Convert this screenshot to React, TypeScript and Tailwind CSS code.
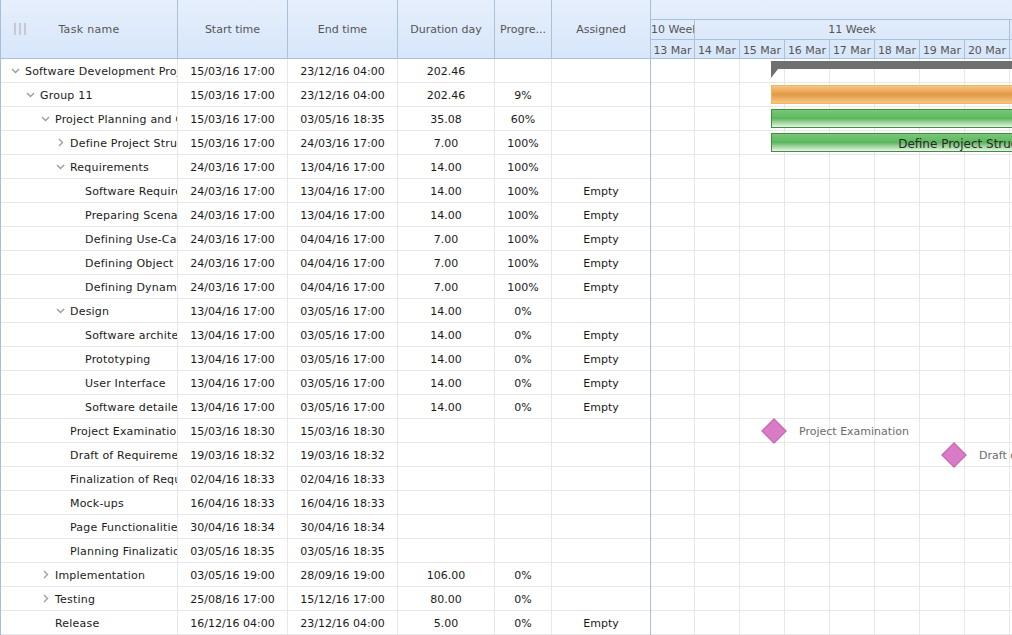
import React from "react";

type Row = {
  level: number;
  name: string;
  exp: "open" | "closed" | null;
  start: string;
  end: string;
  dur: string;
  prog: string;
  asg: string;
};

const rows: Row[] = [
  { level: 0, name: "Software Development Project", exp: "open", start: "15/03/16 17:00", end: "23/12/16 04:00", dur: "202.46", prog: "", asg: "" },
  { level: 1, name: "Group 11", exp: "open", start: "15/03/16 17:00", end: "23/12/16 04:00", dur: "202.46", prog: "9%", asg: "" },
  { level: 2, name: "Project Planning and Control", exp: "open", start: "15/03/16 17:00", end: "03/05/16 18:35", dur: "35.08", prog: "60%", asg: "" },
  { level: 3, name: "Define Project Structure", exp: "closed", start: "15/03/16 17:00", end: "24/03/16 17:00", dur: "7.00", prog: "100%", asg: "" },
  { level: 3, name: "Requirements", exp: "open", start: "24/03/16 17:00", end: "13/04/16 17:00", dur: "14.00", prog: "100%", asg: "" },
  { level: 4, name: "Software Requirements", exp: null, start: "24/03/16 17:00", end: "13/04/16 17:00", dur: "14.00", prog: "100%", asg: "Empty" },
  { level: 4, name: "Preparing Scenarios", exp: null, start: "24/03/16 17:00", end: "13/04/16 17:00", dur: "14.00", prog: "100%", asg: "Empty" },
  { level: 4, name: "Defining Use-Cases", exp: null, start: "24/03/16 17:00", end: "04/04/16 17:00", dur: "7.00", prog: "100%", asg: "Empty" },
  { level: 4, name: "Defining Object Model", exp: null, start: "24/03/16 17:00", end: "04/04/16 17:00", dur: "7.00", prog: "100%", asg: "Empty" },
  { level: 4, name: "Defining Dynamic Model", exp: null, start: "24/03/16 17:00", end: "04/04/16 17:00", dur: "7.00", prog: "100%", asg: "Empty" },
  { level: 3, name: "Design", exp: "open", start: "13/04/16 17:00", end: "03/05/16 17:00", dur: "14.00", prog: "0%", asg: "" },
  { level: 4, name: "Software architecture", exp: null, start: "13/04/16 17:00", end: "03/05/16 17:00", dur: "14.00", prog: "0%", asg: "Empty" },
  { level: 4, name: "Prototyping", exp: null, start: "13/04/16 17:00", end: "03/05/16 17:00", dur: "14.00", prog: "0%", asg: "Empty" },
  { level: 4, name: "User Interface", exp: null, start: "13/04/16 17:00", end: "03/05/16 17:00", dur: "14.00", prog: "0%", asg: "Empty" },
  { level: 4, name: "Software detailed design", exp: null, start: "13/04/16 17:00", end: "03/05/16 17:00", dur: "14.00", prog: "0%", asg: "Empty" },
  { level: 3, name: "Project Examination", exp: null, start: "15/03/16 18:30", end: "15/03/16 18:30", dur: "", prog: "", asg: "" },
  { level: 3, name: "Draft of Requirements", exp: null, start: "19/03/16 18:32", end: "19/03/16 18:32", dur: "", prog: "", asg: "" },
  { level: 3, name: "Finalization of Requirements", exp: null, start: "02/04/16 18:33", end: "02/04/16 18:33", dur: "", prog: "", asg: "" },
  { level: 3, name: "Mock-ups", exp: null, start: "16/04/16 18:33", end: "16/04/16 18:33", dur: "", prog: "", asg: "" },
  { level: 3, name: "Page Functionalities", exp: null, start: "30/04/16 18:34", end: "30/04/16 18:34", dur: "", prog: "", asg: "" },
  { level: 3, name: "Planning Finalization", exp: null, start: "03/05/16 18:35", end: "03/05/16 18:35", dur: "", prog: "", asg: "" },
  { level: 2, name: "Implementation", exp: "closed", start: "03/05/16 19:00", end: "28/09/16 19:00", dur: "106.00", prog: "0%", asg: "" },
  { level: 2, name: "Testing", exp: "closed", start: "25/08/16 17:00", end: "15/12/16 17:00", dur: "80.00", prog: "0%", asg: "" },
  { level: 2, name: "Release", exp: null, start: "16/12/16 04:00", end: "23/12/16 04:00", dur: "5.00", prog: "0%", asg: "Empty" },
];

const days = ["13 Mar", "14 Mar", "15 Mar", "16 Mar", "17 Mar", "18 Mar", "19 Mar", "20 Mar", "21 Mar"];

function Chevron({ dir }: { dir: "open" | "closed" }) {
  return (
    <svg width="9" height="9" viewBox="0 0 9 9" className="block">
      {dir === "open" ? (
        <polyline points="1,3 4.5,6.5 8,3" fill="none" stroke="#9a9a9a" strokeWidth="1.3" />
      ) : (
        <polyline points="3,1 6.5,4.5 3,8" fill="none" stroke="#9a9a9a" strokeWidth="1.3" />
      )}
    </svg>
  );
}

const headCell =
  "h-full flex items-center justify-center pt-[2px] text-[#555] border-r border-[#a9c2da] shrink-0 whitespace-nowrap overflow-hidden";
const bodyCell =
  "h-full flex items-center justify-center pt-[3px] border-r border-[#e8e8e8] shrink-0 whitespace-nowrap overflow-hidden";

function dayW(i: number) {
  return i === 0 ? "w-[44px]" : "w-[45px]";
}

export default function App() {
  return (
    <div className="w-[1012px] h-[635px] overflow-hidden bg-white flex font-['DejaVu_Sans',sans-serif] text-[11px] text-[#1a1a1a]">
      {/* Left grid */}
      <div className="w-[651px] shrink-0 h-full flex flex-col border-l border-r border-[#a3bfdb]">
        <div className="h-[59px] shrink-0 flex border-b border-[#a9c2da] bg-gradient-to-b from-[#e6effc] to-[#d7e6fa] relative">
          <div className={`${headCell} w-[177px] relative`}>
            <div className="absolute left-[13px] top-[23px] flex gap-[3px]">
              <div className="w-[2px] h-[12px] bg-[#c6c9cd]" />
              <div className="w-[2px] h-[12px] bg-[#c6c9cd]" />
              <div className="w-[2px] h-[12px] bg-[#c6c9cd]" />
            </div>
            <span className="tracking-[0.3px]">Task name</span>
          </div>
          <div className={`${headCell} w-[110px]`}>Start time</div>
          <div className={`${headCell} w-[110px]`}>End time</div>
          <div className={`${headCell} w-[97px]`}>Duration day</div>
          <div className={`${headCell} w-[57px]`}>Progre...</div>
          <div className={`${headCell} w-[98px] border-r-0`}>Assigned</div>
        </div>
        <div className="flex flex-col">
          {rows.map((r, i) => (
            <div key={i} className="h-[24px] shrink-0 flex border-b border-[#e8e8e8]">
              <div className={`${bodyCell} w-[177px] justify-start`} style={{ paddingLeft: 7 + r.level * 15 }}>
                <div className="w-[15px] h-full flex items-center justify-center shrink-0 -mt-[3px]">
                  {r.exp && <Chevron dir={r.exp} />}
                </div>
                <span className="ml-[2px] tracking-[0.2px]">{r.name}</span>
              </div>
              <div className={`${bodyCell} w-[110px]`}>{r.start}</div>
              <div className={`${bodyCell} w-[110px]`}>{r.end}</div>
              <div className={`${bodyCell} w-[97px]`}>{r.dur}</div>
              <div className={`${bodyCell} w-[57px]`}>{r.prog}</div>
              <div className={`${bodyCell} w-[98px] border-r-0`}>{r.asg}</div>
            </div>
          ))}
        </div>
      </div>

      {/* Gantt chart */}
      <div className="flex-1 h-full flex flex-col overflow-hidden">
        <div className="h-[59px] shrink-0 flex flex-col bg-gradient-to-b from-[#e6effc] to-[#d7e6fa] border-b border-[#a9c2da] text-[#555]">
          <div className="h-[20px] shrink-0 border-b border-[#a9c2da]" />
          <div className="h-[20px] shrink-0 flex border-b border-[#a9c2da]">
            <div className="w-[44px] shrink-0 h-full pt-[2px] border-r border-[#a9c2da] overflow-hidden whitespace-nowrap flex items-center">
              10 Week
            </div>
            <div className="w-[315px] shrink-0 h-full pt-[2px] border-r border-[#a9c2da] flex items-center justify-center whitespace-nowrap">
              11 Week
            </div>
            <div className="w-[45px] shrink-0 h-full" />
          </div>
          <div className="flex-1 flex">
            {days.map((d, i) => (
              <div
                key={d}
                className={`${dayW(i)} shrink-0 h-full pt-[3px] border-r border-[#a9c2da] flex items-center justify-center whitespace-nowrap overflow-hidden`}
              >
                {d}
              </div>
            ))}
          </div>
        </div>
        <div className="relative flex flex-col">
          {rows.map((_, i) => (
            <div key={i} className="h-[24px] shrink-0 flex border-b border-[#e8e8e8]">
              {days.map((d, j) => (
                <div key={d} className={`${dayW(j)} shrink-0 h-full border-r border-[#e8e8e8]`} />
              ))}
            </div>
          ))}

          {/* summary bar */}
          <div className="absolute left-[120px] top-[2px] w-[500px] h-[8px] bg-[#6d6f71]" />
          <svg className="absolute left-[120px] top-[10px]" width="7" height="9" viewBox="0 0 7 9">
            <polygon points="0,0 7,0 0,9" fill="#6d6f71" />
          </svg>

          {/* orange group bar */}
          <div className="absolute left-[120px] top-[26px] w-[500px] h-[19px] border border-[#f3b466] bg-gradient-to-b from-[#f8c47f] via-[#e29944] to-[#f8c682]" />

          {/* green bars */}
          <div className="absolute left-[120px] top-[50px] w-[500px] h-[19px] border border-[#3f8f3f] bg-gradient-to-b from-[#78c878] via-[#5db75d] to-[#e6f4e6]" />
          <div className="absolute left-[120px] top-[74px] w-[398px] h-[19px] pt-[2px] border border-[#3f8f3f] bg-gradient-to-b from-[#78c878] via-[#5db75d] to-[#e6f4e6] flex items-center justify-center whitespace-nowrap text-[12px] text-[#2a2a2a]">
            Define Project Structure
          </div>

          {/* milestones */}
          <div className="absolute left-[114px] top-[363px] w-[18px] h-[18px] rotate-45 bg-[#d97cc5] border border-[#c862b4]" />
          <div className="absolute left-[148px] top-[361px] h-[24px] flex items-center whitespace-nowrap text-[#6b6b6b]">
            Project Examination
          </div>
          <div className="absolute left-[294px] top-[387px] w-[18px] h-[18px] rotate-45 bg-[#d97cc5] border border-[#c862b4]" />
          <div className="absolute left-[328px] top-[385px] h-[24px] flex items-center whitespace-nowrap text-[#6b6b6b]">
            Draft of Requirements
          </div>
        </div>
      </div>
    </div>
  );
}
